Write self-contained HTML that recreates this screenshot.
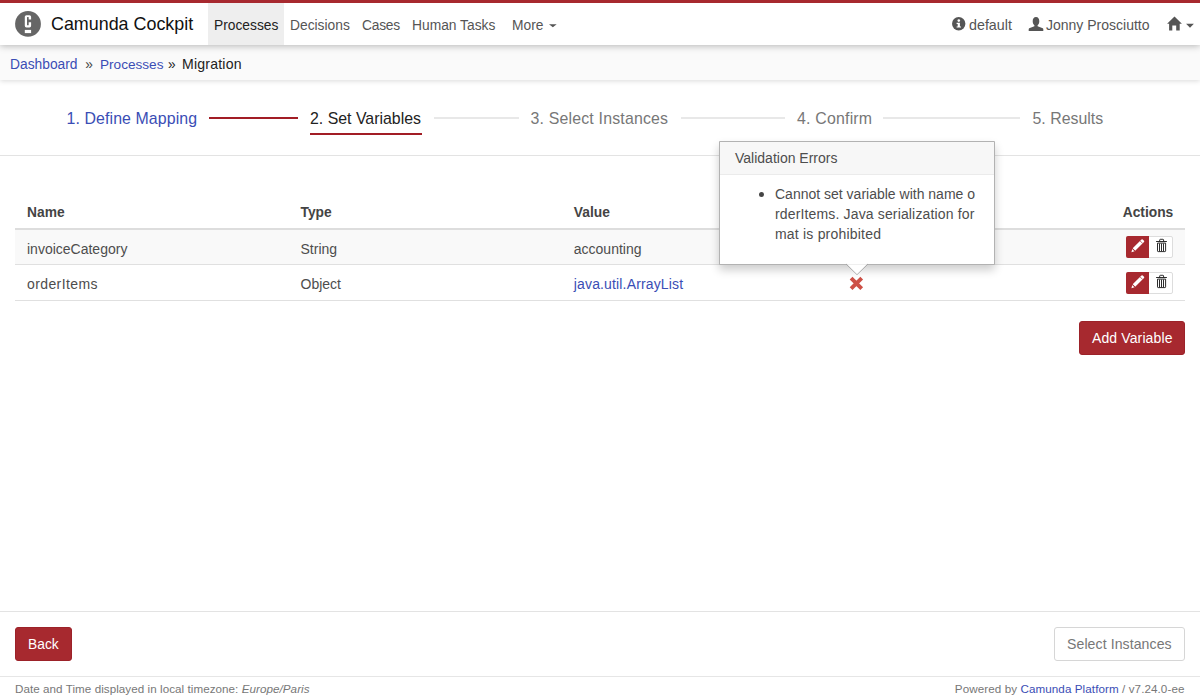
<!DOCTYPE html>
<html><head><meta charset="utf-8">
<style>
*{box-sizing:border-box;margin:0;padding:0}
html,body{width:1200px;height:700px;overflow:hidden;background:#fff;font-family:"Liberation Sans",sans-serif;color:#333}
.t{position:absolute;white-space:nowrap;line-height:1}
.b{position:absolute}
#topbar{position:absolute;left:0;top:0;width:1200px;height:3px;background:#a7292f;z-index:4}
#header{position:absolute;left:0;top:3px;width:1200px;height:42px;background:#fff;box-shadow:0 1px 7px rgba(0,0,0,.28);z-index:3}
#bc{position:absolute;left:0;top:45px;width:1200px;height:35px;background:#fafafa;box-shadow:0 1px 5px rgba(0,0,0,.15);z-index:2}
.nav{font-size:13.8px;color:#555;top:16.3px}
.link{color:#3a4db5}
.step{font-size:15.9px;top:110.5px}
.sline{position:absolute;height:2px;top:117px;background:#e8e8e8}
.th{font-weight:bold;font-size:13.8px;color:#444;top:206.1px}
.td{font-size:14px;color:#4d4d4d}
.hl{position:absolute;left:15px;width:1170px;background:#ddd}
</style></head>
<body>
<div id="topbar"></div>
<div id="header">
  <svg class="b" style="left:0;top:-3px" width="50" height="45" viewBox="0 0 50 45">
    <circle cx="28" cy="23.9" r="12.9" fill="#666"/>
    <path d="M26.4 15.25H29.5Q31.1 15.25 31.1 16.85V19.4H28.7V17.4Q28.7 17.1 28.4 17.1H27.3Q27 17.1 27 17.4V24.9Q27 25.2 27.3 25.2H28.4Q28.7 25.2 28.7 24.9V22.3H31.1V25.8Q31.1 27.4 29.5 27.4H26.4Q24.8 27.4 24.8 25.8V16.85Q24.8 15.25 26.4 15.25Z" fill="#fff"/>
    <rect x="24.8" y="29.9" width="6.3" height="3.2" fill="#fff"/>
  </svg>
  <div class="t" style="left:51px;top:13.1px;font-size:17.9px;color:#111">Camunda Cockpit</div>
  <div class="b" style="left:208px;top:0;width:76px;height:42px;background:#eee"></div>
  <div class="t nav" style="left:214px;color:#222">Processes</div>
  <div class="t nav" style="left:290px">Decisions</div>
  <div class="t nav" style="left:362px;letter-spacing:-.25px">Cases</div>
  <div class="t nav" style="left:412px">Human Tasks</div>
  <div class="t nav" style="left:512px">More</div>
  <svg class="b" style="left:548px;top:20px" width="10" height="6"><path d="M1 1.2H8.7L4.85 4.2Z" fill="#555"/></svg>
  <svg class="b" style="left:950px;top:11px" width="18" height="18" viewBox="0 0 18 18">
    <circle cx="8.7" cy="9.7" r="6.7" fill="#555"/>
    <circle cx="8.8" cy="6.6" r="1.3" fill="#fff"/>
    <path d="M6.6 8.7H9.9V12.4H11V13.6H6.6V12.4H7.7V9.9H6.6Z" fill="#fff"/>
  </svg>
  <div class="t nav" style="left:969px;font-size:14.3px;top:15.3px">default</div>
  <svg class="b" style="left:1027px;top:12px" width="18" height="18" viewBox="0 0 18 18">
    <path d="M9 2C11.2 2 12.3 3.8 12.3 6.2C12.3 8 11.6 9.4 10.6 10.3V11.3L15.8 13.3Q16.3 13.6 16.3 14.2V15.9H1.7V14.2Q1.7 13.6 2.2 13.3L7.4 11.3V10.3C6.4 9.4 5.7 8 5.7 6.2C5.7 3.8 6.8 2 9 2Z" fill="#555"/>
  </svg>
  <div class="t nav" style="left:1046px;font-size:14px;top:15.3px">Jonny Prosciutto</div>
  <svg class="b" style="left:1165px;top:11px" width="35" height="20" viewBox="0 0 35 20">
    <path d="M9.5 2.4L16.9 9.8H14.7V16.6H11.2V11.6H7.3V16.6H4.1V9.8H2.1Z" fill="#555"/>
    
    <path d="M21.1 9.8H28.9L25 13.7Z" fill="#555"/>
  </svg>
</div>
<div id="bc">
  <div class="t link" style="left:10px;top:13.1px;font-size:13.8px">Dashboard</div>
  <div class="t" style="left:85.3px;top:13.1px;font-size:13.8px;color:#444">&raquo;</div>
  <div class="t link" style="left:100px;top:13.1px;font-size:13.6px">Processes</div>
  <div class="t" style="left:168px;top:13.1px;font-size:13.8px;color:#222">&raquo;</div>
  <div class="t" style="left:182px;top:12.1px;font-size:14.1px;color:#222;letter-spacing:.2px">Migration</div>
</div>

<div class="b" style="left:0;top:155px;width:1200px;height:1px;background:#e3e3e3"></div>
<div class="t step link" style="left:66.5px;letter-spacing:.1px">1. Define Mapping</div>
<div class="sline" style="left:209px;width:89px;background:#a21d25"></div>
<div class="t step" style="left:310px;color:#222">2. Set Variables</div>
<div class="b" style="left:310px;top:133px;width:112px;height:2px;background:#a21d25"></div>
<div class="sline" style="left:434px;width:85px"></div>
<div class="t step" style="left:530.5px;color:#777;letter-spacing:.18px">3. Select Instances</div>
<div class="sline" style="left:681px;width:104px"></div>
<div class="t step" style="left:797px;color:#777;letter-spacing:.2px">4. Confirm</div>
<div class="sline" style="left:883px;width:137px"></div>
<div class="t step" style="left:1032.5px;color:#777">5. Results</div>

<!-- table -->
<div class="t th" style="left:27px">Name</div>
<div class="t th" style="left:300.5px">Type</div>
<div class="t th" style="left:573.8px">Value</div>
<div class="t th" style="left:1122.7px">Actions</div>
<div class="hl" style="top:228px;height:2px"></div>
<div class="b" style="left:15px;top:230px;width:1170px;height:34px;background:#f9f9f9"></div>
<div class="hl" style="top:264px;height:1px;background:#e0e0e0"></div>
<div class="hl" style="top:300px;height:1px;background:#e0e0e0"></div>
<div class="t td" style="left:27px;top:242.25px">invoiceCategory</div>
<div class="t td" style="left:300.5px;top:242.25px">String</div>
<div class="t td" style="left:573.8px;top:242.25px">accounting</div>
<div class="t td" style="left:27px;top:277.05px;letter-spacing:.4px">orderItems</div>
<div class="t td" style="left:300.5px;top:277.05px">Object</div>
<div class="t td" style="left:573.8px;top:277.05px;color:#3a4db5;letter-spacing:.15px">java.util.ArrayList</div>

<!-- action buttons -->
<div class="b" style="left:1126px;top:236px;width:47px;height:22px;border:1px solid #ddd;border-radius:2px;background:#fff"></div>
<div class="b" style="left:1126px;top:236px;width:23px;height:22px;background:#a7292f;border-radius:2px 0 0 2px"></div>
<div class="b" style="left:1126px;top:272px;width:47px;height:22px;border:1px solid #ddd;border-radius:2px;background:#fff"></div>
<div class="b" style="left:1126px;top:272px;width:23px;height:22px;background:#a7292f;border-radius:2px 0 0 2px"></div>
<svg class="b" style="left:1126px;top:236px" width="47" height="22" viewBox="0 0 47 22">
  <path d="M15.5 3.5Q16.1 2.9 16.7 3.5L18 4.8Q18.6 5.4 18 6L9.2 14.8L6.7 12.3Z M6.3 12.9L8.6 15.2L5.4 16.2Z" fill="#fff"/><path d="M14.1 4.9L16.6 7.4 M6.3 12.5L8.9 15.1" stroke="#a7292f" stroke-width=".7"/>
  <path d="M30.1 5.5H40.9 M33.7 5.5V4Q33.7 3.3 34.4 3.3H36.9Q37.6 3.3 37.6 4V5.5 M31.5 7.1V14.9Q31.5 15.6 32.2 15.6H38.9Q39.6 15.6 39.6 14.9V7.1Z M33.5 7.5V15.2 M35.5 7.5V15.2 M37.5 7.5V15.2" fill="none" stroke="#222" stroke-width=".95"/>
</svg>
<svg class="b" style="left:1126px;top:272px" width="47" height="22" viewBox="0 0 47 22">
  <path d="M15.5 3.5Q16.1 2.9 16.7 3.5L18 4.8Q18.6 5.4 18 6L9.2 14.8L6.7 12.3Z M6.3 12.9L8.6 15.2L5.4 16.2Z" fill="#fff"/><path d="M14.1 4.9L16.6 7.4 M6.3 12.5L8.9 15.1" stroke="#a7292f" stroke-width=".7"/>
  <path d="M30.1 5.5H40.9 M33.7 5.5V4Q33.7 3.3 34.4 3.3H36.9Q37.6 3.3 37.6 4V5.5 M31.5 7.1V14.9Q31.5 15.6 32.2 15.6H38.9Q39.6 15.6 39.6 14.9V7.1Z M33.5 7.5V15.2 M35.5 7.5V15.2 M37.5 7.5V15.2" fill="none" stroke="#222" stroke-width=".95"/>
</svg>

<!-- red X -->
<svg class="b" style="left:848px;top:275px" width="17" height="17" viewBox="0 0 17 17">
  <path d="M3.1 3.1L13.7 13.7 M13.7 3.1L3.1 13.7" stroke="#cd5046" stroke-width="3.9"/>
</svg>

<!-- add variable -->
<div class="b" style="left:1079px;top:321px;width:106px;height:34px;background:#a7292f;border:1px solid #9c2229;border-radius:3px"></div>
<div class="t" style="left:1092px;top:330.95px;font-size:14px;color:#fff;letter-spacing:.12px">Add Variable</div>

<!-- popover -->
<div class="b" style="left:719px;top:141px;width:276px;height:124px;background:#fff;border:1px solid rgba(0,0,0,.3);box-shadow:0 5px 10px rgba(0,0,0,.2);border-radius:1px"></div>
<div class="b" style="left:720px;top:142px;width:274px;height:33px;background:#f7f7f7;border-bottom:1px solid #ebebeb"></div>
<div class="t" style="left:735px;top:150.9px;font-size:14px;color:#4d4d4d">Validation Errors</div>
<div class="b" style="left:759px;top:192.3px;width:5px;height:5px;border-radius:50%;background:#444"></div>
<div class="t" style="left:775px;top:187.15px;font-size:14px;color:#4d4d4d">Cannot set variable with name o</div>
<div class="t" style="left:775px;top:206.9px;font-size:14px;color:#4d4d4d;letter-spacing:.15px">rderItems. Java serialization for</div>
<div class="t" style="left:775px;top:226.65px;font-size:14px;color:#4d4d4d;letter-spacing:.2px">mat is prohibited</div>
<svg class="b" style="left:845px;top:263px" width="24" height="13" viewBox="0 0 24 13">
  <path d="M1.5 1.3L12 11.7L22.5 1.3" fill="#fff" stroke="rgba(0,0,0,.3)" stroke-width="1"/>
  <rect x="2.5" y="0" width="19" height="1.2" fill="#fff"/>
</svg>

<!-- footer -->
<div class="b" style="left:0;top:611px;width:1200px;height:1px;background:#e3e3e3"></div>
<div class="b" style="left:15px;top:627px;width:57px;height:34px;background:#a7292f;border:1px solid #9c2229;border-radius:3px"></div>
<div class="t" style="left:28px;top:638.3px;font-size:13.8px;color:#fff">Back</div>
<div class="b" style="left:1054px;top:627px;width:131px;height:34px;background:#fff;border:1px solid #d6d6d6;border-radius:3px"></div>
<div class="t" style="left:1067px;top:637.3px;font-size:14.1px;color:#777;letter-spacing:.08px">Select Instances</div>
<div class="b" style="left:0;top:676px;width:1200px;height:1px;background:#e6e6e6"></div>
<div class="t" style="left:15px;top:683.1px;font-size:11.65px;color:#777;letter-spacing:.05px">Date and Time displayed in local timezone: <i>Europe/Paris</i></div>
<div class="t" style="right:15.5px;top:683.1px;font-size:11.65px;color:#777;letter-spacing:.08px">Powered by <span class="link">Camunda Platform</span> / v7.24.0-ee</div>
</body></html>
